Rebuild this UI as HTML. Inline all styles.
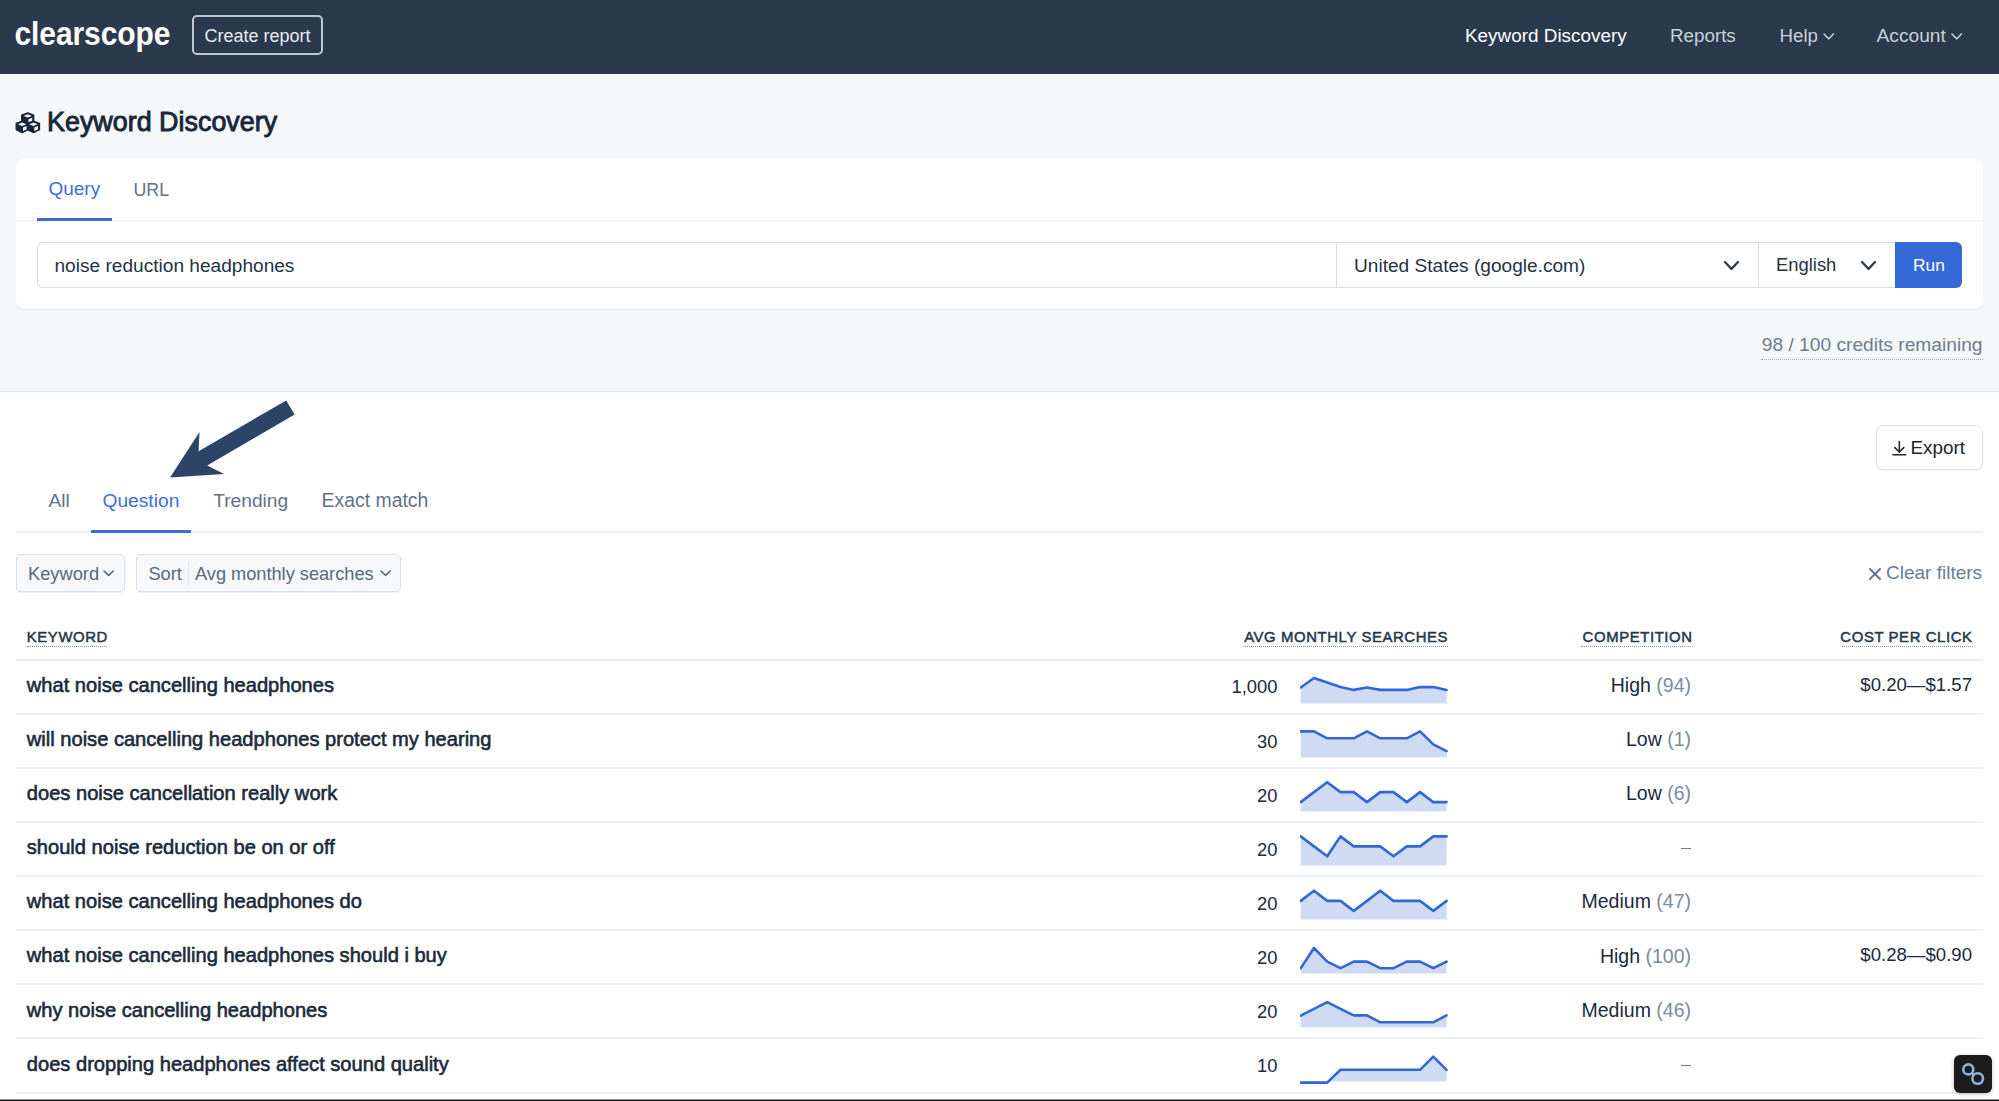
<!DOCTYPE html>
<html><head><meta charset="utf-8"><title>Keyword Discovery</title>
<style>
html,body{margin:0;padding:0;}
body{width:1999px;height:1101px;position:relative;overflow:hidden;background:#fff;font-family:"Liberation Sans",sans-serif;}
.t{position:absolute;white-space:nowrap;}
.r{position:absolute;}
</style></head><body>
<div class="r" style="left:0px;top:0px;width:1999px;height:73.5px;background:#2b394c;"></div>
<div class="t" style="left:14.50px;top:19.61px;font-size:30px;line-height:30px;color:#fbfcfd;font-weight:700;letter-spacing:-0.1px;transform:scaleY(1.13);transform-origin:0 25.4px;">clearscope</div>
<div class="r" style="left:192px;top:15px;width:131px;height:40px;border:2px solid #bfc6cf;border-radius:5px;box-sizing:border-box;"></div>
<div class="t" style="left:204.50px;top:26.76px;font-size:18px;line-height:18px;color:#e6eaee;font-weight:400;">Create report</div>
<div class="t" style="left:1465.00px;top:26.80px;font-size:18.9px;line-height:18.9px;color:#ffffff;font-weight:400;">Keyword Discovery</div>
<div class="t" style="left:1670.00px;top:26.89px;font-size:18.8px;line-height:18.8px;color:#c8d0d9;font-weight:400;">Reports</div>
<div class="t" style="left:1779.50px;top:26.97px;font-size:18.7px;line-height:18.7px;color:#c8d0d9;font-weight:400;">Help</div>
<div class="t" style="left:1876.50px;top:26.05px;font-size:19.2px;line-height:19.2px;color:#c8d0d9;font-weight:400;">Account</div>
<svg class="r" style="left:1821.8px;top:31.799999999999997px" width="13.400000000000091" height="8.700000000000003"><polyline points="2,2 6.7000000000000455,6.700000000000003 11.400000000000091,2" fill="none" stroke="#c8d0d9" stroke-width="1.6" stroke-linecap="round" stroke-linejoin="round"/></svg>
<svg class="r" style="left:1949.8px;top:31.799999999999997px" width="13.400000000000091" height="8.700000000000003"><polyline points="2,2 6.7000000000000455,6.700000000000003 11.400000000000091,2" fill="none" stroke="#c8d0d9" stroke-width="1.6" stroke-linecap="round" stroke-linejoin="round"/></svg>
<div class="r" style="left:0px;top:73.5px;width:1999px;height:317.5px;background:#f5f8fb;"></div>
<div class="r" style="left:0px;top:391px;width:1999px;height:1px;background:#e7ebf0;"></div>
<svg class="r" style="left:12px;top:108px" width="32" height="28"><path d="M15.7,4.799999999999997 L21.7,6.999999999999997 L21.7,13.199999999999998 L15.7,16.299999999999997 L9.7,13.199999999999998 L9.7,6.999999999999997 Z" fill="#172536" stroke="#172536" stroke-width="1.3" stroke-linejoin="round"/><path d="M11.6,7.899999999999997 L15.7,6.1999999999999975 L19.799999999999997,7.899999999999997 L15.7,9.599999999999998 Z" fill="#fbfcfd"/><path d="M16.5,11.199999999999998 L20.2,9.699999999999998 L20.2,13.099999999999998 L16.5,14.599999999999998 Z" fill="#fbfcfd"/><path d="M10.2,13.200000000000003 L16.2,15.400000000000002 L16.2,21.6 L10.2,24.700000000000003 L4.199999999999999,21.6 L4.199999999999999,15.400000000000002 Z" fill="#172536" stroke="#172536" stroke-width="1.3" stroke-linejoin="round"/><path d="M6.1,16.300000000000004 L10.2,14.600000000000003 L14.299999999999999,16.300000000000004 L10.2,18.000000000000004 Z" fill="#fbfcfd"/><path d="M11.0,19.6 L14.7,18.1 L14.7,21.500000000000004 L11.0,23.000000000000004 Z" fill="#fbfcfd"/><path d="M21.5,13.200000000000003 L27.5,15.400000000000002 L27.5,21.6 L21.5,24.700000000000003 L15.5,21.6 L15.5,15.400000000000002 Z" fill="#172536" stroke="#172536" stroke-width="1.3" stroke-linejoin="round"/><path d="M17.4,16.300000000000004 L21.5,14.600000000000003 L25.6,16.300000000000004 L21.5,18.000000000000004 Z" fill="#fbfcfd"/><path d="M22.3,19.6 L26.0,18.1 L26.0,21.500000000000004 L22.3,23.000000000000004 Z" fill="#fbfcfd"/></svg>
<div class="t" style="left:47.00px;top:108.73px;font-size:26.9px;line-height:26.9px;color:#182838;font-weight:400;-webkit-text-stroke:0.9px #182838;">Keyword Discovery</div>
<div class="r" style="left:16px;top:159px;width:1967px;height:150px;background:#fff;border-radius:8px;box-shadow:0 1px 2px rgba(30,45,60,0.08);"></div>
<div class="r" style="left:16px;top:220px;width:1967px;height:1px;background:#edf1f5;"></div>
<div class="t" style="left:48.40px;top:179.12px;font-size:19px;line-height:19px;color:#3b6fd9;font-weight:400;">Query</div>
<div class="t" style="left:133.50px;top:182.13px;font-size:17.8px;line-height:17.8px;color:#5f7286;font-weight:400;">URL</div>
<div class="r" style="left:37px;top:218px;width:75px;height:3px;background:#3b6cd8;"></div>
<div class="r" style="left:37px;top:242px;width:1858px;height:46px;border:1px solid #d6dde6;border-right:none;border-radius:6px 0 0 6px;box-sizing:border-box;background:#fff;"></div>
<div class="r" style="left:1336px;top:242px;width:1px;height:46px;background:#d6dde6;"></div>
<div class="r" style="left:1758px;top:242px;width:1px;height:46px;background:#d6dde6;"></div>
<div class="r" style="left:1895px;top:242px;width:67px;height:46px;background:#3469d6;border-radius:0 6px 6px 0;"></div>
<div class="t" style="left:54.50px;top:256.23px;font-size:19.1px;line-height:19.1px;color:#243343;font-weight:400;">noise reduction headphones</div>
<div class="t" style="left:1354.00px;top:255.63px;font-size:19.1px;line-height:19.1px;color:#243343;font-weight:400;">United States (google.com)</div>
<div class="t" style="left:1776.00px;top:256.22px;font-size:18.4px;line-height:18.4px;color:#243343;font-weight:400;">English</div>
<div class="t" style="left:1913.00px;top:257.07px;font-size:17.4px;line-height:17.4px;color:#ffffff;font-weight:400;">Run</div>
<svg class="r" style="left:1723px;top:259.5px" width="17" height="11.0"><polyline points="2,2 8.5,9.0 15,2" fill="none" stroke="#2a3848" stroke-width="2.2" stroke-linecap="round" stroke-linejoin="round"/></svg>
<svg class="r" style="left:1860px;top:259.5px" width="17" height="11.0"><polyline points="2,2 8.5,9.0 15,2" fill="none" stroke="#2a3848" stroke-width="2.2" stroke-linecap="round" stroke-linejoin="round"/></svg>
<div class="t" style="right:16.50px;top:334.95px;font-size:19.2px;line-height:19.2px;color:#6b7d90;font-weight:400;">98 / 100 credits remaining</div>
<div class="r" style="left:1761px;top:358.5px;width:222px;height:0;border-top:1.5px dotted #9aa8b6;"></div>
<svg class="r" style="left:0;top:0" width="400" height="500"><polygon points="170,477.6 199.5,432 198.6,451.3 286.2,400.4 294.6,414.5 207.2,465.4 224,474" fill="#2c4566"/></svg>
<div class="t" style="left:48.50px;top:491.05px;font-size:19.2px;line-height:19.2px;color:#5f7286;font-weight:400;">All</div>
<div class="t" style="left:102.50px;top:491.05px;font-size:19.2px;line-height:19.2px;color:#3b6fd9;font-weight:400;">Question</div>
<div class="t" style="left:213.20px;top:491.05px;font-size:19.2px;line-height:19.2px;color:#5f7286;font-weight:400;">Trending</div>
<div class="t" style="left:321.60px;top:490.88px;font-size:19.4px;line-height:19.4px;color:#5f7286;font-weight:400;">Exact match</div>
<div class="r" style="left:16px;top:531px;width:1967px;height:2px;background:#ebeff4;"></div>
<div class="r" style="left:91px;top:530px;width:100px;height:3px;background:#3b6cd8;"></div>
<div class="r" style="left:1876px;top:425px;width:107px;height:45px;border:1px solid #dbe2ea;border-radius:7px;box-sizing:border-box;background:#fff;box-shadow:0 1px 1px rgba(30,45,60,0.06);"></div>
<svg class="r" style="left:1892px;top:440px" width="15" height="16"><g fill="none" stroke="#1b2430" stroke-width="1.6" stroke-linecap="round" stroke-linejoin="round"><path d="M7.3 1.5 V12"/><path d="M2.8 7.6 L7.3 12 L11.8 7.6"/><path d="M1 14.8 H13.6"/></g></svg>
<div class="t" style="left:1910.50px;top:439.30px;font-size:18.9px;line-height:18.9px;color:#1b2430;font-weight:400;">Export</div>
<div class="r" style="left:16px;top:554px;width:109px;height:38px;border:1px solid #d9e0e8;border-radius:5px;box-sizing:border-box;background:#f6f8fb;box-shadow:0 1px 1px rgba(30,45,60,0.07);"></div>
<div class="r" style="left:136px;top:554px;width:265px;height:38px;border:1px solid #d9e0e8;border-radius:5px;box-sizing:border-box;background:#f6f8fb;box-shadow:0 1px 1px rgba(30,45,60,0.07);"></div>
<div class="r" style="left:188px;top:561px;width:1px;height:25px;background:#e0e6ec;"></div>
<div class="t" style="left:28.00px;top:564.51px;font-size:18.3px;line-height:18.3px;color:#56697e;font-weight:400;">Keyword</div>
<div class="t" style="left:148.40px;top:564.51px;font-size:18.3px;line-height:18.3px;color:#56697e;font-weight:400;">Sort</div>
<div class="t" style="left:195.00px;top:564.59px;font-size:18.2px;line-height:18.2px;color:#56697e;font-weight:400;">Avg monthly searches</div>
<svg class="r" style="left:102px;top:569.3px" width="13.200000000000003" height="8.300000000000068"><polyline points="2,2 6.600000000000001,6.300000000000068 11.200000000000003,2" fill="none" stroke="#56697e" stroke-width="1.6" stroke-linecap="round" stroke-linejoin="round"/></svg>
<svg class="r" style="left:378.5px;top:569.3px" width="13.199999999999989" height="8.300000000000068"><polyline points="2,2 6.599999999999994,6.300000000000068 11.199999999999989,2" fill="none" stroke="#56697e" stroke-width="1.6" stroke-linecap="round" stroke-linejoin="round"/></svg>
<svg class="r" style="left:1868px;top:567px" width="14" height="14"><g stroke="#6a7d92" stroke-width="2.2" stroke-linecap="round"><path d="M2 2 L12 12"/><path d="M12 2 L2 12"/></g></svg>
<div class="t" style="left:1886.00px;top:563.32px;font-size:19px;line-height:19px;color:#6a7d92;font-weight:400;">Clear filters</div>
<div class="t" style="left:26.80px;top:629.69px;font-size:14.9px;line-height:14.9px;color:#27374a;font-weight:400;-webkit-text-stroke:0.5px #27374a;letter-spacing:0.6px;">KEYWORD</div>
<div class="t" style="right:550.90px;top:629.69px;font-size:14.9px;line-height:14.9px;color:#27374a;font-weight:400;-webkit-text-stroke:0.5px #27374a;letter-spacing:0.6px;">AVG MONTHLY SEARCHES</div>
<div class="t" style="right:306.40px;top:629.69px;font-size:14.9px;line-height:14.9px;color:#27374a;font-weight:400;-webkit-text-stroke:0.5px #27374a;letter-spacing:0.6px;">COMPETITION</div>
<div class="t" style="right:26.40px;top:629.69px;font-size:14.9px;line-height:14.9px;color:#27374a;font-weight:400;-webkit-text-stroke:0.5px #27374a;letter-spacing:0.6px;">COST PER CLICK</div>
<div class="r" style="left:26.8px;top:646px;width:80.0px;height:0;border-top:1px dotted #8796a6;"></div>
<div class="r" style="left:1243px;top:646px;width:205px;height:0;border-top:1px dotted #8796a6;"></div>
<div class="r" style="left:1581px;top:646px;width:112px;height:0;border-top:1px dotted #8796a6;"></div>
<div class="r" style="left:1842px;top:646px;width:131px;height:0;border-top:1px dotted #8796a6;"></div>
<div class="r" style="left:16px;top:659px;width:1967px;height:2px;background:#e9edf2;"></div>
<div class="t" style="left:26.80px;top:674.79px;font-size:20.1px;line-height:20.1px;color:#1c2a3a;font-weight:400;-webkit-text-stroke:0.6px #1c2a3a;">what noise cancelling headphones</div>
<div class="t" style="right:721.50px;top:678.42px;font-size:18.4px;line-height:18.4px;color:#1c2a3a;font-weight:400;">1,000</div>
<div class="t" style="right:308.00px;top:675.89px;font-size:19.5px;line-height:19.5px;color:#1c2a3a;font-weight:400;">High <span style="color:#7a8b9d">(94)</span></div>
<div class="t" style="right:27.00px;top:675.66px;font-size:18.6px;line-height:18.6px;color:#1c2a3a;font-weight:400;">$0.20—$1.57</div>
<svg class="r" style="left:1300px;top:665.50px" width="150" height="42"><polygon points="0.70,37.6 0.70,21.50 13.96,12.00 27.22,16.60 40.48,21.10 53.74,23.90 67.00,21.50 80.26,23.90 93.52,23.90 106.78,23.90 120.04,21.10 133.30,21.10 146.56,23.90 146.56,37.6" fill="#cfdbf3"/><polyline points="0.70,21.50 13.96,12.00 27.22,16.60 40.48,21.10 53.74,23.90 67.00,21.50 80.26,23.90 93.52,23.90 106.78,23.90 120.04,21.10 133.30,21.10 146.56,23.90" fill="none" stroke="#3268d6" stroke-width="2.6" stroke-linejoin="round" stroke-linecap="round"/></svg>
<div class="r" style="left:16px;top:713px;width:1967px;height:2px;background:#eef1f5;"></div>
<div class="t" style="left:26.80px;top:728.91px;font-size:20.1px;line-height:20.1px;color:#1c2a3a;font-weight:400;-webkit-text-stroke:0.6px #1c2a3a;">will noise cancelling headphones protect my hearing</div>
<div class="t" style="right:721.50px;top:732.55px;font-size:18.4px;line-height:18.4px;color:#1c2a3a;font-weight:400;">30</div>
<div class="t" style="right:308.00px;top:730.02px;font-size:19.5px;line-height:19.5px;color:#1c2a3a;font-weight:400;">Low <span style="color:#7a8b9d">(1)</span></div>
<svg class="r" style="left:1300px;top:719.62px" width="150" height="42"><polygon points="0.70,37.6 0.70,11.40 13.96,11.40 27.22,18.30 40.48,18.30 53.74,18.30 67.00,11.40 80.26,18.30 93.52,18.30 106.78,18.30 120.04,11.40 133.30,24.40 146.56,31.20 146.56,37.6" fill="#cfdbf3"/><polyline points="0.70,11.40 13.96,11.40 27.22,18.30 40.48,18.30 53.74,18.30 67.00,11.40 80.26,18.30 93.52,18.30 106.78,18.30 120.04,11.40 133.30,24.40 146.56,31.20" fill="none" stroke="#3268d6" stroke-width="2.6" stroke-linejoin="round" stroke-linecap="round"/></svg>
<div class="r" style="left:16px;top:767px;width:1967px;height:2px;background:#eef1f5;"></div>
<div class="t" style="left:26.80px;top:783.04px;font-size:20.1px;line-height:20.1px;color:#1c2a3a;font-weight:400;-webkit-text-stroke:0.6px #1c2a3a;">does noise cancellation really work</div>
<div class="t" style="right:721.50px;top:786.67px;font-size:18.4px;line-height:18.4px;color:#1c2a3a;font-weight:400;">20</div>
<div class="t" style="right:308.00px;top:784.14px;font-size:19.5px;line-height:19.5px;color:#1c2a3a;font-weight:400;">Low <span style="color:#7a8b9d">(6)</span></div>
<svg class="r" style="left:1300px;top:773.75px" width="150" height="42"><polygon points="0.70,37.6 0.70,28.10 13.96,18.10 27.22,8.20 40.48,18.10 53.74,18.10 67.00,28.10 80.26,18.10 93.52,18.10 106.78,28.10 120.04,18.10 133.30,28.10 146.56,28.10 146.56,37.6" fill="#cfdbf3"/><polyline points="0.70,28.10 13.96,18.10 27.22,8.20 40.48,18.10 53.74,18.10 67.00,28.10 80.26,18.10 93.52,18.10 106.78,28.10 120.04,18.10 133.30,28.10 146.56,28.10" fill="none" stroke="#3268d6" stroke-width="2.6" stroke-linejoin="round" stroke-linecap="round"/></svg>
<div class="r" style="left:16px;top:821px;width:1967px;height:2px;background:#eef1f5;"></div>
<div class="t" style="left:26.80px;top:837.16px;font-size:20.1px;line-height:20.1px;color:#1c2a3a;font-weight:400;-webkit-text-stroke:0.6px #1c2a3a;">should noise reduction be on or off</div>
<div class="t" style="right:721.50px;top:840.80px;font-size:18.4px;line-height:18.4px;color:#1c2a3a;font-weight:400;">20</div>
<div class="r" style="left:1681px;top:848px;width:10px;height:1px;background:#6b7b8c;"></div>
<svg class="r" style="left:1300px;top:827.88px" width="150" height="42"><polygon points="0.70,37.6 0.70,8.40 13.96,18.40 27.22,28.30 40.48,8.40 53.74,18.40 67.00,18.40 80.26,18.40 93.52,28.30 106.78,18.40 120.04,18.40 133.30,8.40 146.56,8.40 146.56,37.6" fill="#cfdbf3"/><polyline points="0.70,8.40 13.96,18.40 27.22,28.30 40.48,8.40 53.74,18.40 67.00,18.40 80.26,18.40 93.52,28.30 106.78,18.40 120.04,18.40 133.30,8.40 146.56,8.40" fill="none" stroke="#3268d6" stroke-width="2.6" stroke-linejoin="round" stroke-linecap="round"/></svg>
<div class="r" style="left:16px;top:875px;width:1967px;height:2px;background:#eef1f5;"></div>
<div class="t" style="left:26.80px;top:891.29px;font-size:20.1px;line-height:20.1px;color:#1c2a3a;font-weight:400;-webkit-text-stroke:0.6px #1c2a3a;">what noise cancelling headphones do</div>
<div class="t" style="right:721.50px;top:894.92px;font-size:18.4px;line-height:18.4px;color:#1c2a3a;font-weight:400;">20</div>
<div class="t" style="right:308.00px;top:892.39px;font-size:19.5px;line-height:19.5px;color:#1c2a3a;font-weight:400;">Medium <span style="color:#7a8b9d">(47)</span></div>
<svg class="r" style="left:1300px;top:882.00px" width="150" height="42"><polygon points="0.70,37.6 0.70,18.90 13.96,8.70 27.22,18.90 40.48,18.90 53.74,28.90 67.00,18.90 80.26,8.70 93.52,18.90 106.78,18.90 120.04,18.90 133.30,28.90 146.56,18.90 146.56,37.6" fill="#cfdbf3"/><polyline points="0.70,18.90 13.96,8.70 27.22,18.90 40.48,18.90 53.74,28.90 67.00,18.90 80.26,8.70 93.52,18.90 106.78,18.90 120.04,18.90 133.30,28.90 146.56,18.90" fill="none" stroke="#3268d6" stroke-width="2.6" stroke-linejoin="round" stroke-linecap="round"/></svg>
<div class="r" style="left:16px;top:929px;width:1967px;height:2px;background:#eef1f5;"></div>
<div class="t" style="left:26.80px;top:945.41px;font-size:20.1px;line-height:20.1px;color:#1c2a3a;font-weight:400;-webkit-text-stroke:0.6px #1c2a3a;">what noise cancelling headphones should i buy</div>
<div class="t" style="right:721.50px;top:949.05px;font-size:18.4px;line-height:18.4px;color:#1c2a3a;font-weight:400;">20</div>
<div class="t" style="right:308.00px;top:946.52px;font-size:19.5px;line-height:19.5px;color:#1c2a3a;font-weight:400;">High <span style="color:#7a8b9d">(100)</span></div>
<div class="t" style="right:27.00px;top:946.28px;font-size:18.6px;line-height:18.6px;color:#1c2a3a;font-weight:400;">$0.28—$0.90</div>
<svg class="r" style="left:1300px;top:936.12px" width="150" height="42"><polygon points="0.70,37.6 0.70,32.20 13.96,12.00 27.22,25.60 40.48,32.20 53.74,25.60 67.00,25.60 80.26,32.20 93.52,32.20 106.78,25.60 120.04,25.60 133.30,32.20 146.56,25.60 146.56,37.6" fill="#cfdbf3"/><polyline points="0.70,32.20 13.96,12.00 27.22,25.60 40.48,32.20 53.74,25.60 67.00,25.60 80.26,32.20 93.52,32.20 106.78,25.60 120.04,25.60 133.30,32.20 146.56,25.60" fill="none" stroke="#3268d6" stroke-width="2.6" stroke-linejoin="round" stroke-linecap="round"/></svg>
<div class="r" style="left:16px;top:983px;width:1967px;height:2px;background:#eef1f5;"></div>
<div class="t" style="left:26.80px;top:999.54px;font-size:20.1px;line-height:20.1px;color:#1c2a3a;font-weight:400;-webkit-text-stroke:0.6px #1c2a3a;">why noise cancelling headphones</div>
<div class="t" style="right:721.50px;top:1003.17px;font-size:18.4px;line-height:18.4px;color:#1c2a3a;font-weight:400;">20</div>
<div class="t" style="right:308.00px;top:1000.64px;font-size:19.5px;line-height:19.5px;color:#1c2a3a;font-weight:400;">Medium <span style="color:#7a8b9d">(46)</span></div>
<svg class="r" style="left:1300px;top:990.25px" width="150" height="42"><polygon points="0.70,37.6 0.70,25.60 13.96,18.80 27.22,12.20 40.48,18.80 53.74,25.40 67.00,25.40 80.26,32.30 93.52,32.30 106.78,32.30 120.04,32.30 133.30,32.30 146.56,25.40 146.56,37.6" fill="#cfdbf3"/><polyline points="0.70,25.60 13.96,18.80 27.22,12.20 40.48,18.80 53.74,25.40 67.00,25.40 80.26,32.30 93.52,32.30 106.78,32.30 120.04,32.30 133.30,32.30 146.56,25.40" fill="none" stroke="#3268d6" stroke-width="2.6" stroke-linejoin="round" stroke-linecap="round"/></svg>
<div class="r" style="left:16px;top:1037px;width:1967px;height:2px;background:#eef1f5;"></div>
<div class="t" style="left:26.80px;top:1053.66px;font-size:20.1px;line-height:20.1px;color:#1c2a3a;font-weight:400;-webkit-text-stroke:0.6px #1c2a3a;">does dropping headphones affect sound quality</div>
<div class="t" style="right:721.50px;top:1057.30px;font-size:18.4px;line-height:18.4px;color:#1c2a3a;font-weight:400;">10</div>
<div class="r" style="left:1681px;top:1065px;width:10px;height:1px;background:#6b7b8c;"></div>
<svg class="r" style="left:1300px;top:1044.38px" width="150" height="42"><polygon points="0.70,37.6 0.70,38.60 13.96,38.60 27.22,38.60 40.48,25.80 53.74,25.80 67.00,25.80 80.26,25.80 93.52,25.80 106.78,25.80 120.04,25.80 133.30,12.60 146.56,25.80 146.56,37.6" fill="#cfdbf3"/><polyline points="0.70,38.60 13.96,38.60 27.22,38.60 40.48,25.80 53.74,25.80 67.00,25.80 80.26,25.80 93.52,25.80 106.78,25.80 120.04,25.80 133.30,12.60 146.56,25.80" fill="none" stroke="#3268d6" stroke-width="2.6" stroke-linejoin="round" stroke-linecap="round"/></svg>
<div class="r" style="left:16px;top:1092px;width:1967px;height:2px;background:#eef1f5;"></div>
<div class="r" style="left:1954px;top:1055px;width:38px;height:38px;background:#1c1c1c;border-radius:6px;box-shadow:0 1px 4px rgba(0,0,0,0.25);"></div>
<svg class="r" style="left:1954px;top:1055px" width="38" height="38"><g fill="none" stroke="#8fb3d6" stroke-width="2.6"><circle cx="14.3" cy="14.4" r="5"/><circle cx="23.7" cy="23.5" r="5.3"/><path d="M17.5 17.5 L20.5 20.5" stroke-width="2.4"/></g></svg>
<div class="r" style="left:0px;top:1099px;width:1999px;height:1px;background:rgba(17,17,17,0.45);"></div>
<div class="r" style="left:0px;top:1100px;width:1999px;height:1px;background:#111;"></div>
</body></html>
